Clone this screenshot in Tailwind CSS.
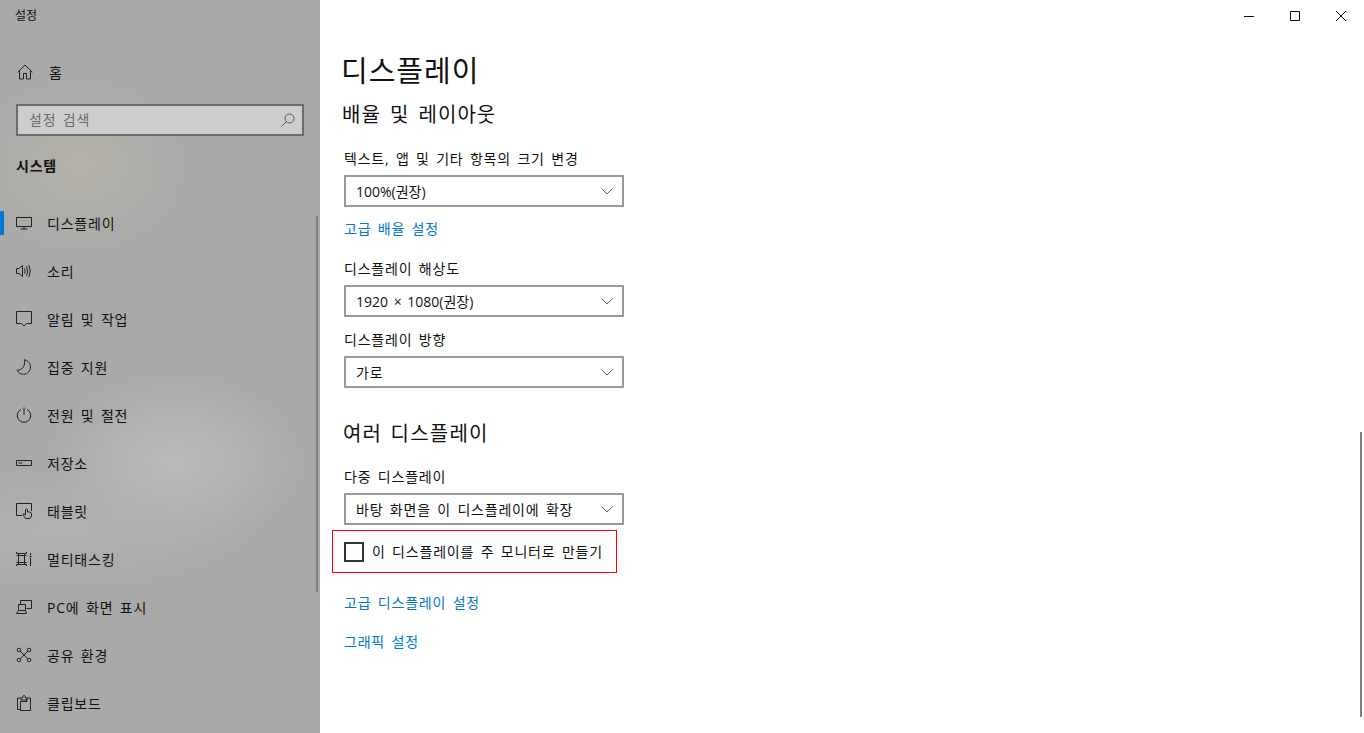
<!DOCTYPE html>
<html lang="ko">
<head>
  <title>설정</title>
  <meta charset="utf-8">
  <script src="https://cdn.jsdelivr.net/npm/@tailwindcss/browser@4"></script>
</head>
<body class="font-['Open_Sans','Noto_Sans_CJK_KR',sans-serif] text-[14px] tracking-[0.8px] [word-spacing:2px] text-[#111] bg-white overflow-hidden">
  <div class="flex h-[733px] w-[1364px] relative overflow-hidden">

    <!-- sidebar -->
    <aside class="relative w-[320px] h-full shrink-0 overflow-hidden bg-[#a9a9a9] bg-[radial-gradient(ellipse_130px_90px_at_175px_462px,#bababa_0%,#b4b2b2_45%,transparent_100%),radial-gradient(ellipse_110px_90px_at_80px_165px,#b3b1a8_0%,transparent_100%),radial-gradient(ellipse_200px_60px_at_60px_530px,#b0b1b0_0%,transparent_100%)]">
      <div class="h-[32px] pl-[15px] pt-[6px] text-[12px] leading-[20px] tracking-normal">설정</div>
      <div class="flex items-center h-[48px] pl-[17px] mt-[16px]">
        <svg class="w-[16px] h-[16px]" viewBox="0 0 16 16" fill="none" stroke="#222" stroke-width="1"><path d="M.7 8.2 8 1l7.300 7.200M2.500 6.600V15H6.500V9.500H9.500V15H13.500V6.600"/></svg>
        <span class="ml-[16px]">홈</span>
      </div>
      <div class="mx-[16px] mt-[8px] h-[32px] border-2 border-[#6b6b6b] bg-[#cdcdcd] flex items-center justify-between pl-[11px] pr-[7px] text-[#6a6a6a]">
        <span class="relative top-[-1px]">설정 검색</span>
        <svg class="w-[14px] h-[14px]" viewBox="0 0 14 14" fill="none" stroke="#555" stroke-width="1"><circle cx="8.500" cy="5.500" r="4.500"/><path d="M5.300 8.700.5 13.500"/></svg>
      </div>
      <div class="pl-[16px] mt-[18px] h-[24px] leading-[24px] font-bold text-[14px]">시스템</div>

      <nav class="mt-[21px]">
        <div class="relative flex items-center h-[48px] pl-[16px]">
          <span class="absolute left-0 top-[12px] w-[4px] h-[24px] bg-[#0078d7]"></span>
          <svg class="w-[16px] h-[16px]" viewBox="0 0 16 16" fill="none" stroke="#222" stroke-width="1"><path d="M.5 2.500H15.500V11.500H.5ZM8 11.500V14M4.500 14H11.500"/></svg>
          <span class="ml-[15px]">디스플레이</span>
        </div>
        <div class="flex items-center h-[48px] pl-[16px]">
          <svg class="w-[16px] h-[16px]" viewBox="0 0 16 16" fill="none" stroke="#222" stroke-width="1"><path d="M.5 5.500H3L6.500 2.500V13.500L3 10.500H.5ZM8.500 5.500Q10 8 8.500 10.500M10.500 3.500Q13 8 10.500 12.500M12.800 2Q15.800 8 12.800 14"/></svg>
          <span class="ml-[15px]">소리</span>
        </div>
        <div class="flex items-center h-[48px] pl-[16px]">
          <svg class="w-[16px] h-[16px]" viewBox="0 0 16 16" fill="none" stroke="#222" stroke-width="1"><path d="M.5 .5H15.500V12.500H10.500L8 15 5.500 12.500H.5Z"/></svg>
          <span class="ml-[15px]">알림 및 작업</span>
        </div>
        <div class="flex items-center h-[48px] pl-[16px]">
          <svg class="w-[16px] h-[16px]" viewBox="0 0 16 16" fill="none" stroke="#222" stroke-width="1"><path d="M8.500 .7C12 1.500 14.500 4.500 14.500 8 14.500 12 11.500 15.300 7.500 15.300 4.500 15.300 2 13.500 1 11 5.500 12 9.800 7 8.500 .7Z"/></svg>
          <span class="ml-[15px]">집중 지원</span>
        </div>
        <div class="flex items-center h-[48px] pl-[16px]">
          <svg class="w-[16px] h-[16px]" viewBox="0 0 16 16" fill="none" stroke="#222" stroke-width="1"><path d="M8 .5V8M5 2.400A6.800 6.800 0 1 0 11 2.400"/></svg>
          <span class="ml-[15px]">전원 및 절전</span>
        </div>
        <div class="flex items-center h-[48px] pl-[16px]">
          <svg class="w-[16px] h-[16px]" viewBox="0 0 16 16" fill="none" stroke="#222" stroke-width="1"><path d="M.5 5.500H15.500V10.500H.5ZM2.500 8H6"/></svg>
          <span class="ml-[15px]">저장소</span>
        </div>
        <div class="flex items-center h-[48px] pl-[16px]">
          <svg class="w-[16px] h-[16px]" viewBox="0 0 16 16" fill="none" stroke="#222" stroke-width="1"><path d="M6 12.500H.5V.5H15.500V8M9.500 15.500 7 11.500Q7 10.500 8.500 11L9.500 12V6.500Q10.500 5 11.500 6.500V9H14Q15.500 9.500 15.500 11V13L14 15.500Z"/></svg>
          <span class="ml-[15px]">태블릿</span>
        </div>
        <div class="flex items-center h-[48px] pl-[16px]">
          <svg class="w-[16px] h-[16px]" viewBox="0 0 16 16" fill="none" stroke="#222" stroke-width="1"><path d="M.5 1V2.500H10.500V1M.5 15V13.500H10.500V15M2.500 2.500V13.500M8.500 2.500V13.500M.5 11.500H10.500M.5 4.500H10.500M14.500 2V4M14.500 7V15"/><circle cx="14.500" cy="5.500" r="1" fill="#222" stroke="none"/></svg>
          <span class="ml-[15px]">멀티태스킹</span>
        </div>
        <div class="flex items-center h-[48px] pl-[16px]">
          <svg class="w-[16px] h-[16px]" viewBox="0 0 16 16" fill="none" stroke="#222" stroke-width="1"><path d="M4.500 5V1.500H15.500V9.500H10.500M2.500 5.500H9.500V11.500H2.500ZM.5 14.500H10.500L9.500 11.500M.5 14.500 2.500 11.500"/></svg>
          <span class="ml-[15px]">PC에 화면 표시</span>
        </div>
        <div class="flex items-center h-[48px] pl-[16px]">
          <svg class="w-[16px] h-[16px]" viewBox="0 0 16 16" fill="none" stroke="#222" stroke-width="1"><circle cx="3" cy="3" r="1.800"/><circle cx="13" cy="3" r="1.800"/><circle cx="3" cy="13" r="1.800"/><circle cx="13" cy="13" r="1.800"/><path d="M4.300 4.300 11.700 11.700M11.700 4.300 4.300 11.700"/></svg>
          <span class="ml-[15px]">공유 환경</span>
        </div>
        <div class="flex items-center h-[48px] pl-[16px]">
          <svg class="w-[16px] h-[16px]" viewBox="0 0 16 16" fill="none" stroke="#222" stroke-width="1"><path d="M5 3H1.500V14.500H4.500M11 3H14.500V15.500H4.500V6.500H11ZM5 3H6.500Q6.500 .5 8 .5T9.500 3H11V5H5Z"/></svg>
          <span class="ml-[15px]">클립보드</span>
        </div>
      </nav>

      <!-- sidebar scrollbar -->
      <div class="absolute left-[316px] top-[216px] w-[2px] h-[376px] bg-[#7f7f7f]"></div>
    </aside>

    <!-- content -->
    <main class="flex-1 min-w-0">
      <div class="flex justify-end h-[32px]">
        <div class="w-[46px] h-[32px] flex items-center justify-center">
          <svg class="w-[10px] h-[10px]" viewBox="0 0 10 10" fill="none" stroke="#111" stroke-width="1"><path d="M0 5.500H10"/></svg>
        </div>
        <div class="w-[46px] h-[32px] flex items-center justify-center">
          <svg class="w-[10px] h-[10px]" viewBox="0 0 10 10" fill="none" stroke="#111" stroke-width="1"><path d="M.5 .5H9.500V9.500H.5Z"/></svg>
        </div>
        <div class="w-[46px] h-[32px] flex items-center justify-center">
          <svg class="w-[10px] h-[10px]" viewBox="0 0 10 10" fill="none" stroke="#111" stroke-width="1"><path d="M0 0 10 10M10 0 0 10"/></svg>
        </div>
      </div>

      <div class="pl-[24px]">
        <h1 class="h-[50px] mt-[14px] ml-[-3px] text-[29px] leading-[50px] font-normal tracking-[1px]">디스플레이</h1>
        <h2 class="h-[30px] mt-[4px] ml-[-2px] text-[20px] leading-[30px] font-normal tracking-[1px] [word-spacing:3px]">배율 및 레이아웃</h2>

        <div class="mt-[19px] h-[20px] leading-[20px]">텍스트, 앱 및 기타 항목의 크기 변경</div>
        <div class="mt-[6px] w-[280px] h-[32px] border-2 border-[#999] flex items-center justify-between pl-[10px] pr-[9px]">
          <span class="tracking-normal">100%(권장)</span>
          <svg class="w-[12px] h-[7px]" viewBox="0 0 12 7" fill="none" stroke="#666" stroke-width="1"><path d="M.5 .5 6 6 11.500 .5"/></svg>
        </div>
        <div class="mt-[12px] h-[20px] leading-[20px] text-[#0078d4]">고급 배율 설정</div>

        <div class="mt-[20px] h-[20px] leading-[20px]">디스플레이 해상도</div>
        <div class="mt-[6px] w-[280px] h-[32px] border-2 border-[#999] flex items-center justify-between pl-[10px] pr-[9px]">
          <span class="tracking-normal">1920 × 1080(권장)</span>
          <svg class="w-[12px] h-[7px]" viewBox="0 0 12 7" fill="none" stroke="#666" stroke-width="1"><path d="M.5 .5 6 6 11.500 .5"/></svg>
        </div>

        <div class="mt-[13px] h-[20px] leading-[20px]">디스플레이 방향</div>
        <div class="mt-[6px] w-[280px] h-[32px] border-2 border-[#999] flex items-center justify-between pl-[10px] pr-[9px]">
          <span>가로</span>
          <svg class="w-[12px] h-[7px]" viewBox="0 0 12 7" fill="none" stroke="#666" stroke-width="1"><path d="M.5 .5 6 6 11.500 .5"/></svg>
        </div>

        <h2 class="h-[30px] mt-[31px] ml-[-1px] text-[20px] leading-[30px] font-normal tracking-[1.2px]">여러 디스플레이</h2>

        <div class="mt-[18px] h-[20px] leading-[20px]">다중 디스플레이</div>
        <div class="mt-[6px] w-[280px] h-[32px] border-2 border-[#999] flex items-center justify-between pl-[10px] pr-[9px]">
          <span>바탕 화면을 이 디스플레이에 확장</span>
          <svg class="w-[12px] h-[7px]" viewBox="0 0 12 7" fill="none" stroke="#666" stroke-width="1"><path d="M.5 .5 6 6 11.500 .5"/></svg>
        </div>

        <div class="mt-[5px] ml-[-12px] w-[285px] h-[43px] border border-[#ff0000] flex items-center pl-[11px]">
          <span class="w-[20px] h-[20px] border-2 border-[#333]"></span>
          <span class="ml-[8px]">이 디스플레이를 주 모니터로 만들기</span>
        </div>

        <div class="mt-[20px] h-[20px] leading-[20px] text-[#0078d4]">고급 디스플레이 설정</div>
        <div class="mt-[19px] h-[20px] leading-[20px] text-[#0078d4]">그래픽 설정</div>
      </div>
    </main>

    <!-- page scrollbar -->
    <div class="absolute left-[1360px] top-[432px] w-[2px] h-[285px] bg-[#7f7f7f]"></div>
  </div>
</body>
</html>
